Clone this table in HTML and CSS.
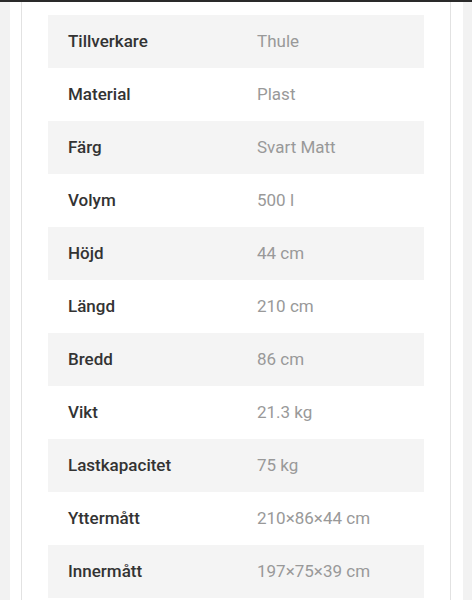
FILE: index.html
```html
<!DOCTYPE html>
<html lang="sv">
<head>
<meta charset="utf-8">
<link rel="stylesheet" href="styles.css">
</head>
<body>
<div class="page">
  <div class="panel">
    <div class="specs">
      <div class="row"><span class="label">Tillverkare</span><span class="value">Thule</span></div>
      <div class="row"><span class="label">Material</span><span class="value">Plast</span></div>
      <div class="row"><span class="label">Färg</span><span class="value">Svart Matt</span></div>
      <div class="row"><span class="label">Volym</span><span class="value">500 l</span></div>
      <div class="row"><span class="label">Höjd</span><span class="value">44 cm</span></div>
      <div class="row"><span class="label">Längd</span><span class="value">210 cm</span></div>
      <div class="row"><span class="label">Bredd</span><span class="value">86 cm</span></div>
      <div class="row"><span class="label">Vikt</span><span class="value">21.3 kg</span></div>
      <div class="row"><span class="label">Lastkapacitet</span><span class="value">75 kg</span></div>
      <div class="row"><span class="label">Yttermått</span><span class="value">210×86×44 cm</span></div>
      <div class="row"><span class="label">Innermått</span><span class="value">197×75×39 cm</span></div>
    </div>
  </div>
</div>
</body>
</html>
```
FILE: styles.css
```css
html, body {
  margin: 0;
  padding: 0;
  background: #f2f2f2;
  font-family: Roboto, "Liberation Sans", sans-serif;
}
body {
  border-top: 2px solid #2a2a2a;
  height: 598px;
  overflow: hidden;
}
.page {
  margin: 0 9px 0 10px;
  background: #ffffff;
  padding: 0 12px 0 11px;
  height: 100%;
}
.panel {
  border-left: 1px solid #e2e2e2;
  border-right: 1px solid #e2e2e2;
  padding: 13px 26px 0 26px;
  height: 100%;
  box-sizing: border-box;
}
.specs {
  display: flex;
  flex-direction: column;
}
.row {
  display: flex;
  align-items: center;
  height: 53px;
  padding-bottom: 2px;
  box-sizing: border-box;
  font-size: 17px;
}
.row:nth-child(odd) {
  background: #f4f4f4;
}
.label {
  width: 209px;
  padding-left: 20px;
  box-sizing: border-box;
  font-weight: 500;
  color: #333333;
}
.value {
  color: #999999;
}
```
